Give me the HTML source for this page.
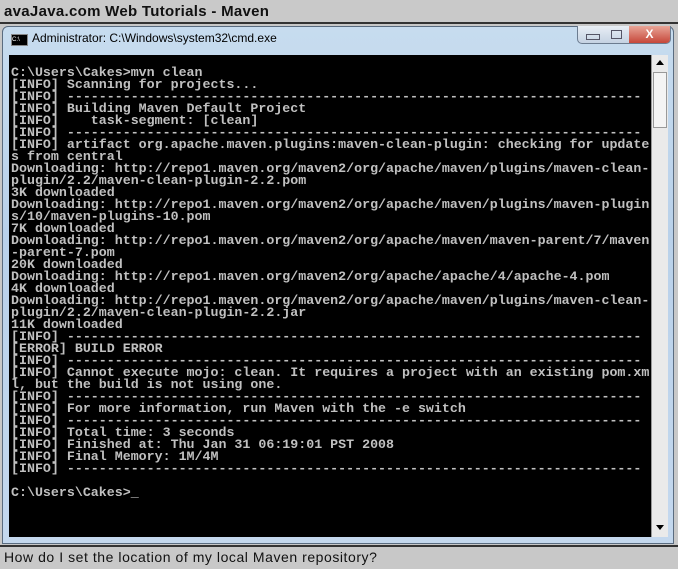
<!DOCTYPE html>
<html><head><meta charset="utf-8"><style>
body{margin:0;width:678px;height:569px;overflow:hidden;background:#c8c8c8;position:relative;font-family:"Liberation Sans",sans-serif}
#title{position:absolute;left:0;top:0;width:678px;height:24px;background:#c9c9c9;border-bottom:2px solid #333;font-size:15px;font-weight:bold;color:#111;line-height:24px;padding-left:4px;box-sizing:border-box;letter-spacing:0.3px}
#frame{position:absolute;left:2px;top:26px;width:672px;height:518px;background:linear-gradient(#c7dcef,#b9d1ea 40%,#c4d8ee);border:1px solid #5a6c80;border-radius:6px 6px 0 0;box-sizing:border-box}
#cap{position:absolute;left:32px;top:31px;font-size:12px;color:#000}
#icon{position:absolute;left:11px;top:34px;width:15px;height:10px;background:#000;border:1px solid #888;font-size:6px;color:#fff;line-height:10px}
#btns{position:absolute;left:577px;top:26px;width:92px;height:17px;border:1px solid #6c7c90;border-top:none;border-radius:0 0 5px 5px;background:linear-gradient(#e8eef5,#c5d2e2);overflow:hidden}
#close{position:absolute;right:0;top:0;width:41px;height:17px;background:linear-gradient(#e8a597,#c6473a);color:#fff;font-weight:bold;text-align:center;font-size:12px;line-height:16px}
#con{position:absolute;left:9px;top:55px;width:642px;height:482px;background:#000}
#txt{position:absolute;left:11px;top:67px;margin:0;font-family:"Liberation Mono",monospace;font-size:13.3px;line-height:12px;color:#c0c0c0;white-space:pre;font-weight:bold;letter-spacing:0}
#sb{position:absolute;left:651px;top:55px;width:16px;height:482px;background:#eaeaea;border-left:1px solid #999}
#thumb{position:absolute;left:1px;top:17px;width:14px;height:56px;background:#f4f4f4;border:1px solid #999;box-sizing:border-box}
#status{position:absolute;left:0;top:545px;width:678px;height:24px;border-top:2px solid #333;background:#c8c8c8;font-size:14px;letter-spacing:0.55px;line-height:21px;padding-left:4px;box-sizing:border-box;color:#111}
</style></head><body>
<div id="title">avaJava.com Web Tutorials - Maven</div>
<div id="frame"></div>
<div id="icon">C:\</div>
<div id="cap">Administrator: C:\Windows\system32\cmd.exe</div>
<div id="btns"><span style="position:absolute;left:8px;top:8px;width:12px;height:4px;border:1px solid #556;"></span><span style="position:absolute;left:33px;top:4px;width:9px;height:7px;border:1px solid #556;"></span><div id="close">X</div></div>
<div id="con"></div>
<pre id="txt">C:\Users\Cakes&gt;mvn clean
[INFO] Scanning for projects...
[INFO] ------------------------------------------------------------------------
[INFO] Building Maven Default Project
[INFO]    task-segment: [clean]
[INFO] ------------------------------------------------------------------------
[INFO] artifact org.apache.maven.plugins:maven-clean-plugin: checking for update
s from central
Downloading: http://repo1.maven.org/maven2/org/apache/maven/plugins/maven-clean-
plugin/2.2/maven-clean-plugin-2.2.pom
3K downloaded
Downloading: http://repo1.maven.org/maven2/org/apache/maven/plugins/maven-plugin
s/10/maven-plugins-10.pom
7K downloaded
Downloading: http://repo1.maven.org/maven2/org/apache/maven/maven-parent/7/maven
-parent-7.pom
20K downloaded
Downloading: http://repo1.maven.org/maven2/org/apache/apache/4/apache-4.pom
4K downloaded
Downloading: http://repo1.maven.org/maven2/org/apache/maven/plugins/maven-clean-
plugin/2.2/maven-clean-plugin-2.2.jar
11K downloaded
[INFO] ------------------------------------------------------------------------
[ERROR] BUILD ERROR
[INFO] ------------------------------------------------------------------------
[INFO] Cannot execute mojo: clean. It requires a project with an existing pom.xm
l, but the build is not using one.
[INFO] ------------------------------------------------------------------------
[INFO] For more information, run Maven with the -e switch
[INFO] ------------------------------------------------------------------------
[INFO] Total time: 3 seconds
[INFO] Finished at: Thu Jan 31 06:19:01 PST 2008
[INFO] Final Memory: 1M/4M
[INFO] ------------------------------------------------------------------------

C:\Users\Cakes&gt;_</pre>
<div id="sb"><div style="position:absolute;left:4px;top:5px;width:0;height:0;border-left:4px solid transparent;border-right:4px solid transparent;border-bottom:5px solid #000"></div><div id="thumb"></div><div style="position:absolute;left:4px;top:470px;width:0;height:0;border-left:4px solid transparent;border-right:4px solid transparent;border-top:5px solid #000"></div></div>
<div id="status">How do I set the location of my local Maven repository?</div>
</body></html>
